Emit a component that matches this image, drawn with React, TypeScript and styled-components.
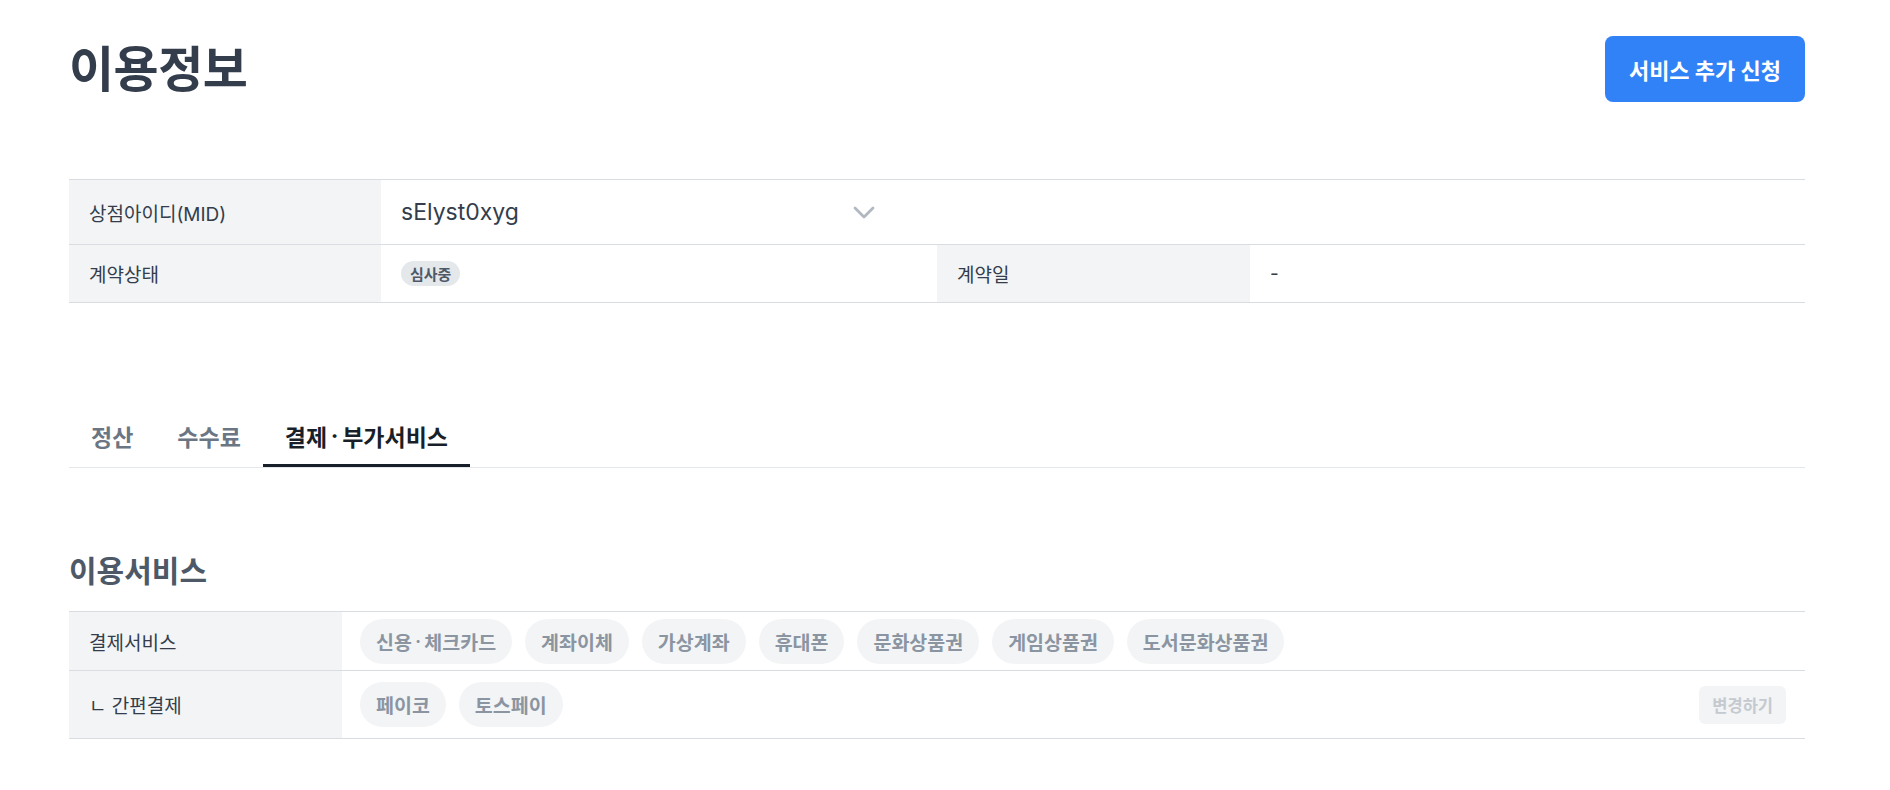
import styled, { createGlobalStyle } from "styled-components";

const GlobalStyle = createGlobalStyle`
  body {
    margin: 0;
    background: #fff;
    font-family: Inter, "Noto Sans CJK KR", sans-serif;
    color: #333d4b;
  }
  * { box-sizing: border-box; }
`;

const payServices = ["신용·체크카드", "계좌이체", "가상계좌", "휴대폰", "문화상품권", "게임상품권", "도서문화상품권"];
const easyPays = ["페이코", "토스페이"];
const tabs = ["정산", "수수료", "결제·부가서비스"];

// middle dot a bit wider than Inter's default
const withDot = (text: string) => {
  const parts = text.split("·");
  if (parts.length === 1) return text;
  return (
    <>
      {parts[0]}
      <Dot>·</Dot>
      {parts[1]}
    </>
  );
};

const Chevron = () => (
  <svg width="22" height="13" viewBox="0 0 22 13" fill="none">
    <polyline points="2,2 11,11 20,2" stroke="#b0b8c1" strokeWidth="2.8" strokeLinecap="round" strokeLinejoin="round" />
  </svg>
);

const App = () => {
  return (
    <Page>
      <GlobalStyle />
      <Header>
        <Title>이용정보</Title>
        <PrimaryButton>서비스 추가 신청</PrimaryButton>
      </Header>

      <InfoTable>
        <LabelCell>상점아이디(MID)</LabelCell>
        <ValueCell $span={3}>
          <SelectBox>
            <span>sElyst0xyg</span>
            <Chevron />
          </SelectBox>
        </ValueCell>
        <LabelCell>계약상태</LabelCell>
        <ValueCell>
          <StatusBadge>심사중</StatusBadge>
        </ValueCell>
        <LabelCell>계약일</LabelCell>
        <ValueCell>-</ValueCell>
      </InfoTable>

      <TabList>
        {tabs.map((t, i) => (
          <Tab key={t} $active={i === 2}>{withDot(t)}</Tab>
        ))}
      </TabList>

      <SectionTitle>이용서비스</SectionTitle>
      <ServiceTable>
        <LabelCell>결제서비스</LabelCell>
        <ChipCell>
          {payServices.map((s) => (
            <Chip key={s}>{withDot(s)}</Chip>
          ))}
        </ChipCell>
        <LabelCell>ㄴ 간편결제</LabelCell>
        <ChipCell>
          {easyPays.map((s) => (
            <Chip key={s}>{s}</Chip>
          ))}
          <GhostButton disabled>변경하기</GhostButton>
        </ChipCell>
      </ServiceTable>
    </Page>
  );
};

export default App;

const Page = styled.div`
  padding: 36px 85px 40px 69px;
`;

const Header = styled.div`
  display: flex;
  justify-content: space-between;
  align-items: center;
  height: 66px;
`;

const Title = styled.h1`
  margin: 0;
  font-size: 49px;
  line-height: 1;
  font-weight: 700;
  color: #333d4b;
  letter-spacing: -0.5px;
`;

const PrimaryButton = styled.button`
  height: 66px;
  padding: 0 24px;
  border: none;
  border-radius: 8px;
  background: #3182f6;
  color: #fff;
  font-family: inherit;
  font-size: 22px;
  font-weight: 700;
`;

const InfoTable = styled.div`
  margin-top: 77px;
  display: grid;
  grid-template-columns: 312px 556px 313px 1fr;
  grid-template-rows: 65px 58px;
  border-top: 1px solid #d9dde1;
`;

const LabelCell = styled.div`
  display: flex;
  align-items: center;
  padding: 0 20px;
  background: #f2f4f6;
  border-bottom: 1px solid #d9dde1;
  font-size: 19px;
  color: #333d4b;
`;

const ValueCell = styled.div<{ $span?: number }>`
  display: flex;
  align-items: center;
  grid-column: span ${(p) => p.$span ?? 1};
  padding: 0 20px;
  border-bottom: 1px solid #d9dde1;
  font-size: 19px;
  color: #333d4b;
`;

const SelectBox = styled.div`
  display: flex;
  align-items: center;
  justify-content: space-between;
  width: 474px;
  font-size: 23px;
  color: #333d4b;
`;

const StatusBadge = styled.span`
  display: inline-flex;
  align-items: center;
  height: 25px;
  padding: 0 9px;
  border-radius: 13px;
  background: #e5e8eb;
  color: #4e5968;
  font-size: 15px;
  font-weight: 600;
`;

const TabList = styled.div`
  margin-top: 105px;
  display: flex;
  border-bottom: 1px solid #e5e8eb;
`;

const Tab = styled.div<{ $active?: boolean }>`
  height: 59px;
  display: flex;
  align-items: center;
  padding: 0 22px;
  font-size: 23px;
  font-weight: 700;
  color: ${(p) => (p.$active ? "#191f28" : "#6b7684")};
  border-bottom: 3px solid ${(p) => (p.$active ? "#191f28" : "transparent")};
`;

const Dot = styled.span`
  margin: 0 0.16em;
`;

const SectionTitle = styled.h2`
  margin: 85px 0 0;
  font-size: 30px;
  line-height: 36px;
  font-weight: 700;
  color: #4e5968;
`;

const ServiceTable = styled.div`
  margin-top: 22px;
  display: grid;
  grid-template-columns: 273px 1fr;
  grid-template-rows: 59px 68px;
  border-top: 1px solid #d9dde1;
`;

const ChipCell = styled.div`
  display: flex;
  align-items: center;
  gap: 13px;
  padding: 0 19px 0 18px;
  border-bottom: 1px solid #d9dde1;
`;

const Chip = styled.span`
  display: inline-flex;
  align-items: center;
  height: 45px;
  padding: 0 16px;
  border-radius: 23px;
  background: #f2f4f6;
  color: #8b95a1;
  font-size: 19.5px;
  font-weight: 600;
`;

const GhostButton = styled.button`
  margin-left: auto;
  height: 38px;
  padding: 0 13px;
  border: none;
  border-radius: 6px;
  background: #f2f4f6;
  color: #c5cad0;
  font-family: inherit;
  font-size: 16.5px;
  font-weight: 600;
`;
